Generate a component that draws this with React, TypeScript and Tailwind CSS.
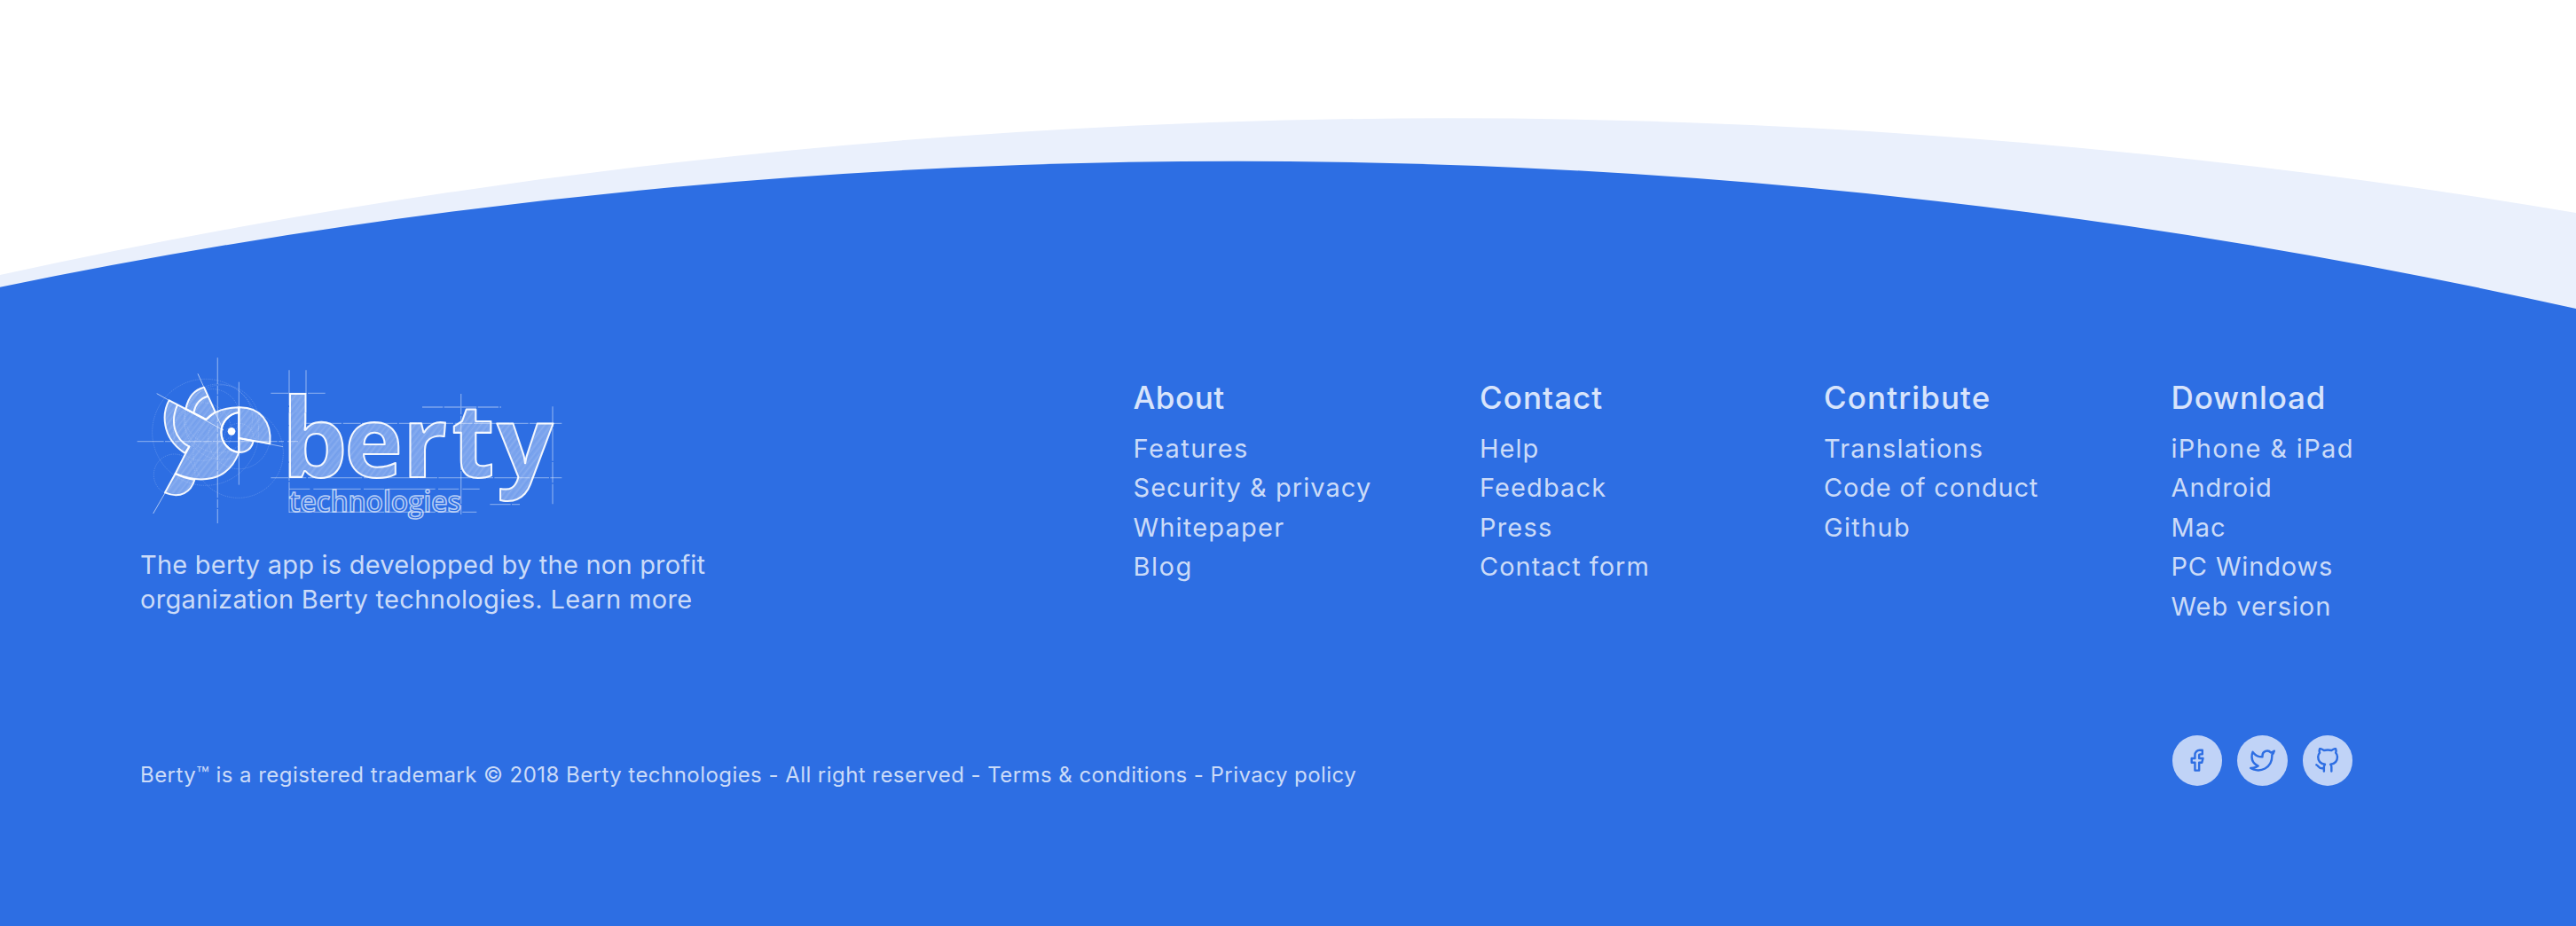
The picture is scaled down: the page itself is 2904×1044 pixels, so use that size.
import type { ReactNode } from "react";

type Item = { label: string; tracking: string };

const columns: { title: Item; links: Item[] }[] = [
  {
    title: { label: "About", tracking: "tracking-[0.55px]" },
    links: [
      { label: "Features", tracking: "tracking-[1.45px]" },
      { label: "Security & privacy", tracking: "tracking-[1.05px]" },
      { label: "Whitepaper", tracking: "tracking-[1.2px]" },
      { label: "Blog", tracking: "tracking-[1.5px]" },
    ],
  },
  {
    title: { label: "Contact", tracking: "tracking-[1.05px]" },
    links: [
      { label: "Help", tracking: "tracking-[1px]" },
      { label: "Feedback", tracking: "tracking-[1.1px]" },
      { label: "Press", tracking: "tracking-[1.2px]" },
      { label: "Contact form", tracking: "tracking-[1px]" },
    ],
  },
  {
    title: { label: "Contribute", tracking: "tracking-[1.1px]" },
    links: [
      { label: "Translations", tracking: "tracking-[1.15px]" },
      { label: "Code of conduct", tracking: "tracking-[0.83px]" },
      { label: "Github", tracking: "tracking-[1.3px]" },
    ],
  },
  {
    title: { label: "Download", tracking: "tracking-[0.9px]" },
    links: [
      { label: "iPhone & iPad", tracking: "tracking-[1.35px]" },
      { label: "Android", tracking: "tracking-[0.95px]" },
      { label: "Mac", tracking: "tracking-[1px]" },
      { label: "PC Windows", tracking: "tracking-[0.85px]" },
      { label: "Web version", tracking: "tracking-[0.95px]" },
    ],
  },
];

function Hills() {
  return (
    <svg className="block h-[390px] w-full shrink-0" viewBox="0 0 2904 390" preserveAspectRatio="none" aria-hidden="true">
      <path d="M0 310A7633 7633 0 0 1 2904 240V390H0Z" fill="#eaf0fc" />
      <path d="M0 323.7A6928 6928 0 0 1 2904 348V391H0Z" fill="#2d6ee3" />
    </svg>
  );
}

function Logo() {
  return (
    <svg className="-ml-2 block h-[210px] w-[500px]" viewBox="0 0 1500 630" role="img" aria-label="berty technologies">
      <defs>
        <pattern id="hatch" width="47" height="900" patternUnits="userSpaceOnUse" patternTransform="rotate(38)">
          <rect width="47" height="900" fill="#fff" fillOpacity="0.37" />
          <g stroke="#fff">
            <path d="M5 0V900" strokeOpacity="0.1" strokeWidth="3" />
            <path d="M19 0V900" strokeOpacity="0.12" strokeWidth="4" />
            <path d="M36 0V900" strokeOpacity="0.08" strokeWidth="5" />
          </g>
          <g stroke="#2d6ee3">
            <path d="M11 0V900" strokeOpacity="0.2" strokeWidth="1.5" strokeDasharray="120 60 40 30" />
            <path d="M27 0V900" strokeOpacity="0.22" strokeWidth="1.5" strokeDasharray="60 30 150 70" />
            <path d="M43 0V900" strokeOpacity="0.18" strokeWidth="2" strokeDasharray="90 50" />
          </g>
        </pattern>
        <clipPath id="bowl"><path d="M500 226H730V500H500Z" /></clipPath>
      </defs>

      <g fill="none" stroke="#fff" strokeOpacity="0.22" strokeWidth="2.5" strokeDasharray="4 3">
        <circle cx="245" cy="292" r="180" />
        <circle cx="356" cy="362" r="152" />
        <circle cx="140" cy="436" r="70" />
        <circle cx="358" cy="312" r="104" />
        <circle cx="288" cy="245" r="116" />
        <circle cx="268" cy="238" r="92" />
        <circle cx="358" cy="312" r="50" />
        <circle cx="235" cy="290" r="98" />
        <circle cx="300" cy="258" r="126" />
      </g>

      <g fill="none" stroke="#fff" strokeOpacity="0.38" strokeWidth="4">
        <path d="M14 323H510M522 323H558M286 40V600" strokeDasharray="90 4 30 4" />
        <path d="M358 122V470M358 312L507 341" strokeOpacity="0.5" strokeWidth="3" />
        <path d="M219 94L305 285L80 161M110 494L68 567" strokeOpacity="0.6" strokeWidth="3" />
        <path d="M528 82V564M585 82V160M466 160H650M466 446H1450M585 262H1450" strokeDasharray="120 5 60 4" />
        <path d="M978 207H1245M1109 162V570M1419 205V535M1207 536H1308" strokeDasharray="70 4 110 4" />
        <path d="M528 484H1172M528 562H1162" strokeDasharray="70 12 160 10" />
      </g>

      <g fill="url(#hatch)" stroke="#fff" strokeWidth="6" strokeOpacity="0.93" strokeLinejoin="round">
        <path fillRule="evenodd" d="M358 208C310 208 272 222 247 249L122 184C99 225 93 310 176 363L190 340L143 432C225 466 320 462 358 360A68 68 0 0 1 358 225Z" />
        <path fill="none" d="M150 200C126 255 137 312 190 341L176 363" />
        <path d="M178 213C186 176 207 148 240 140L278 223L247 249Z" />
        <path fill="none" d="M205 225C211 196 227 177 253 170" />
        <path d="M143 432L108 496C160 518 196 494 208 453C185 449 165 443 143 432Z" />
        <path d="M358 208C430 206 470 258 463 331L358 312Z" />
        <path d="M358 312L407 322C402 345 385 360 358 360Z" />
        <path fill="none" d="M358 208V360A68 68 0 0 1 358 225" />
      </g>
      <circle cx="333" cy="289" r="13" fill="#fff" />

      <g
        className="font-['Open_Sans'] font-bold"
        fontSize="334"
        fill="url(#hatch)"
        stroke="#fff"
        strokeWidth="6"
        strokeOpacity="0.93"
        strokeLinejoin="round"
      >
        <path d="M531 226V162H583.500V226" strokeLinejoin="miter" />
        <g clipPath="url(#bowl)">
          <text transform="translate(503.500 443) scale(1.05 1)">b</text>
        </g>
        <text transform="translate(715 443)">e</text>
        <text transform="translate(911 443)">r</text>
        <text transform="translate(1078 443) scale(1 1.03)">t</text>
        <text transform="translate(1231 443)">y</text>
      </g>
      <text
        className="font-['Open_Sans'] font-semibold"
        x="528"
        y="560"
        fontSize="95"
        textLength="582"
        lengthAdjust="spacingAndGlyphs"
        fill="none"
        stroke="#fff"
        strokeOpacity="0.68"
        strokeWidth="4.5"
      >
        technologies
      </text>
    </svg>
  );
}

function Social({ label, children }: { label: string; children: ReactNode }) {
  return (
    <a aria-label={label} className="flex size-[56.5px] items-center justify-center rounded-full bg-[#c0d3f7] text-[#2d6ee3]">
      <svg className="size-[29px]" viewBox="0 0 24 24" fill="none" stroke="currentColor" strokeWidth="2" strokeLinecap="round" strokeLinejoin="round">
        {children}
      </svg>
    </a>
  );
}

export default function App() {
  return (
    <footer className="flex h-[1044px] w-full flex-col bg-white font-['Inter',sans-serif] text-[#cbdbf8]">
      <Hills />
      <div className="grow bg-[#2d6ee3] pl-[158px]">
        <div className="grid h-[439px] grid-cols-[1119.5px_390.5px_388px_391.5px_1fr] items-start">
          <div>
            <Logo />
            <p className="mt-[17px] whitespace-nowrap text-[29px] leading-[39px] tracking-[0.22px]">
              The berty app is developped by the non profit
              <br />
              <span className="tracking-[0.33px]">organization Berty technologies. Learn more</span>
            </p>
          </div>
          {columns.map(({ title, links }) => (
            <nav key={title.label} className="whitespace-nowrap pt-[34px]">
              <h2 className={`text-[35px] leading-[48px] font-medium text-[#d8e4fb] ${title.tracking}`}>{title.label}</h2>
              <ul className="mt-[11.5px] text-[29px] leading-[44.5px]">
                {links.map(({ label, tracking }) => (
                  <li key={label} className={tracking}>{label}</li>
                ))}
              </ul>
            </nav>
          ))}
        </div>
        <div className="flex items-start justify-between pr-[252px]">
          <p className="pt-[30px] text-[24px] leading-[30px] tracking-[0.45px]">
            Berty™ is a registered trademark © 2018 Berty technologies - All right reserved - Terms &amp; conditions - Privacy policy
          </p>
          <div className="flex gap-[17px]">
            <Social label="Facebook">
              <path d="M17.2 2.3h-2.600a4.300 4.300 0 0 0-4.300 4.300v3.300H7.200v3.900h3.100v7.400h3.900v-7.400h2.600l1-3.900h-3.600V7a.9.9 0 0 1 .9-.9h2.100z" />
            </Social>
            <Social label="Twitter">
              <path d="M23 3a10.900 10.900 0 0 1-3.140 1.530 4.480 4.480 0 0 0-7.860 3v1A10.660 10.660 0 0 1 3 4s-4 9 5 13a11.640 11.640 0 0 1-7 2c9 5 20 0 20-11.500a4.500 4.500 0 0 0-.08-.83A7.720 7.720 0 0 0 23 3z" />
            </Social>
            <Social label="GitHub">
              <path d="M9 19c-5 1.500-5-2.500-7-3m14 6v-3.870a3.370 3.370 0 0 0-.94-2.610c3.140-.35 6.440-1.540 6.440-7A5.440 5.440 0 0 0 20 4.770 5.070 5.070 0 0 0 19.910 1S18.730.65 16 2.480a13.380 13.380 0 0 0-7 0C6.270.65 5.090 1 5.090 1A5.070 5.070 0 0 0 5 4.770a5.440 5.440 0 0 0-1.500 3.780c0 5.420 3.300 6.610 6.440 7A3.370 3.370 0 0 0 9 18.130V22" />
            </Social>
          </div>
        </div>
      </div>
    </footer>
  );
}
